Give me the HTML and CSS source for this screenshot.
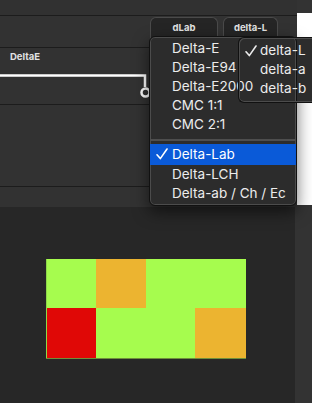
FILE: index.html
```html
<!DOCTYPE html>
<html lang="en">
<head>
    <meta charset="UTF-8">
    <meta name="viewport" content="width=device-width, initial-scale=1.0">
    <title>DeltaE</title>
    <link rel="stylesheet" href="styles.css">
</head>
<body>
    <div class="window">
        <div class="top">
            <div class="main">
                <div class="titlebar"></div>
                <div class="tabrow">
                    <div class="tab tab-dlab">dLab</div>
                    <div class="tab tab-dl">delta-L</div>
                </div>
                <div class="graph">
                    <span class="graph-label">DeltaE</span>
                    <svg class="graph-line" width="149" height="56" viewBox="0 0 149 56">
                        <path d="M0 27.5 H145 V39" fill="none" stroke="#ffffff" stroke-width="2.5"/>
                        <circle cx="145.5" cy="44.5" r="4" fill="none" stroke="#ffffff" stroke-width="2.5"/>
                    </svg>
                </div>
                <div class="row-tall"></div>
                <div class="row-short"></div>
            </div>
            <div class="side"><div class="side-white"></div></div>
        </div>
        <div class="bottom">
            <div class="canvas">
                <div class="heatmap">
                    <div class="cell green"></div>
                    <div class="cell orange"></div>
                    <div class="cell green"></div>
                    <div class="cell green"></div>
                    <div class="cell red"></div>
                    <div class="cell green"></div>
                    <div class="cell green"></div>
                    <div class="cell orange"></div>
                </div>
            </div>
            <div class="strip"></div>
        </div>

        <div class="menu">
            <div class="item"><span class="check"></span>Delta-E</div>
            <div class="item"><span class="check"></span>Delta-E94</div>
            <div class="item"><span class="check"></span>Delta-E2000</div>
            <div class="item"><span class="check"></span>CMC 1:1</div>
            <div class="item"><span class="check"></span>CMC 2:1</div>
            <div class="separator"></div>
            <div class="item active"><span class="check"><svg width="12" height="12" viewBox="0 0 12 12"><path d="M1 6.8 L4.3 10.6 L11 1" fill="none" stroke="currentColor" stroke-width="1.6" stroke-linecap="round" stroke-linejoin="round"/></svg></span>Delta-Lab</div>
            <div class="item"><span class="check"></span>Delta-LCH</div>
            <div class="item"><span class="check"></span>Delta-ab / Ch / Ec</div>
        </div>

        <div class="submenu">
            <div class="item"><span class="check"><svg width="12" height="12" viewBox="0 0 12 12"><path d="M1 6.8 L4.3 10.6 L11 1" fill="none" stroke="currentColor" stroke-width="1.6" stroke-linecap="round" stroke-linejoin="round"/></svg></span>delta-L</div>
            <div class="item"><span class="check"></span>delta-a</div>
            <div class="item"><span class="check"></span>delta-b</div>
        </div>
    </div>
</body>
</html>
```

FILE: styles.css
```css
html, body { margin: 0; padding: 0; }
body { background-color: #272727; font-family: Inter, "Noto Sans", sans-serif; }
.window { position: relative; width: 312px; height: 403px; overflow: hidden; }

.top { display: flex; height: 207px; background-color: #323232; }
.main { width: 297px; }
.titlebar { height: 15px; background-color: #313131; border-bottom: 1px solid #1c1c1c; }
.tabrow { height: 31px; border-bottom: 1px solid #1c1c1c; display: flex; gap: 5px; padding-left: 150px; overflow: hidden; }
.tab { margin-top: 1px; height: 32px; box-sizing: border-box; padding-top: 4px; line-height: 12px; text-align: center; font-size: 9.5px; font-weight: 700; color: #e2e2e2; background-color: #252525; border: 1px solid #4a4a4a; border-bottom: none; border-radius: 6px 6px 0 0; }
.tab-dlab { width: 68px; }
.tab-dl { width: 55px; }
.graph { position: relative; height: 56px; border-bottom: 1px solid #1c1c1c; }
.graph-label { display: block; padding: 3px 0 0 10px; line-height: 12px; font-size: 9.5px; font-weight: 700; color: #e2e2e2; }
.graph-line { position: absolute; left: 0; top: 0; }
.row-tall { height: 81px; border-bottom: 1px solid #1c1c1c; }
.row-short { height: 20px; }
.side { width: 15px; background-color: #333333; }
.side-white { margin-top: 13px; height: 192px; background-color: #ffffff; }

.bottom { display: flex; height: 196px; }
.canvas { flex: 1; padding: 52px 0 0 46px; }
.heatmap { display: grid; grid-template-columns: 49px 50px 49px 51px; grid-template-rows: 49px 50px; width: 199px; border-left: 1px solid #8ed84a; box-shadow: 0 1px 0 #6f8f3a; }
.cell.green { background-color: #a6fc4e; }
.cell.orange { background-color: #ecb430; }
.cell.red { background-color: #e00806; }
.strip { width: 17px; background-color: #333333; }

.menu, .submenu { position: absolute; box-sizing: border-box; border: 1px solid #111111; color: #ececec; font-size: 13.5px; }
.menu { left: 149px; top: 36px; width: 148px; height: 170px; padding: 2px 0; border-radius: 6px; background-color: #2c2c2c; box-shadow: inset 0 0 0 1px #4c4c4c, 0 6px 16px rgba(0, 0, 0, 0.55); }
.submenu { left: 238px; top: 37px; width: 90px; height: 66px; padding: 3px 0; border-radius: 6px 0 0 6px; border-right: none; background: linear-gradient(to right, transparent 58px, #2c2c2c 58px); box-shadow: inset 1px 1px 0 #4c4c4c, inset 0 -1px 0 #4c4c4c; }
.item { height: 19px; line-height: 19px; padding-left: 5px; white-space: nowrap; }
.check { display: inline-block; width: 17px; vertical-align: top; }
.check svg { display: block; margin: 4px 0 0 1px; }
.submenu .check { width: 16px; }
.item.active { height: 21px; line-height: 21px; background-color: #0a5ad8; color: #ffffff; }
.item.active .check svg { margin-top: 4px; }
.separator { height: 10px; box-sizing: border-box; padding-top: 5px; }
.separator::after { content: ""; display: block; height: 2px; background-color: #4e4e4e; }
```
